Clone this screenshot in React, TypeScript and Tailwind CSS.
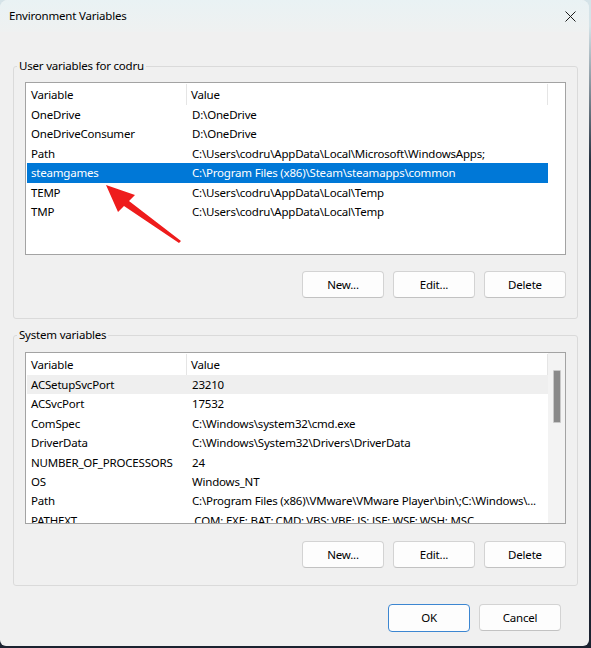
import React from 'react';

type Row = [string, string];

const userRows: Row[] = [
  ['OneDrive', 'D:\\OneDrive'],
  ['OneDriveConsumer', 'D:\\OneDrive'],
  ['Path', 'C:\\Users\\codru\\AppData\\Local\\Microsoft\\WindowsApps;'],
  ['steamgames', 'C:\\Program Files (x86)\\Steam\\steamapps\\common'],
  ['TEMP', 'C:\\Users\\codru\\AppData\\Local\\Temp'],
  ['TMP', 'C:\\Users\\codru\\AppData\\Local\\Temp'],
];

const systemRows: Row[] = [
  ['ACSetupSvcPort', '23210'],
  ['ACSvcPort', '17532'],
  ['ComSpec', 'C:\\Windows\\system32\\cmd.exe'],
  ['DriverData', 'C:\\Windows\\System32\\Drivers\\DriverData'],
  ['NUMBER_OF_PROCESSORS', '24'],
  ['OS', 'Windows_NT'],
  ['Path', 'C:\\Program Files (x86)\\VMware\\VMware Player\\bin\\;C:\\Windows\\...'],
  ['PATHEXT', '.COM;.EXE;.BAT;.CMD;.VBS;.VBE;.JS;.JSE;.WSF;.WSH;.MSC'],
];

function ListBox({ rows, selected, hover, scroll, height }: {
  rows: Row[];
  selected?: number;
  hover?: number;
  scroll?: boolean;
  height: string;
}) {
  return (
    <div className={`${height} border border-[#a3a3a3] bg-white flex overflow-hidden`}>
      <div className="w-[522px] pl-px pt-px overflow-hidden">
        {/* header */}
        <div className="flex h-[21px] leading-[21px]">
          <div className="w-[160px] pl-[4px] border-r border-[#e5e5e5]">Variable</div>
          <div className="flex-1 pl-[4px] border-r border-[#e5e5e5]">Value</div>
        </div>
        {rows.map(([name, value], i) => (
          <div
            key={name + i}
            className={`flex h-[19.4px] leading-[19.4px] whitespace-nowrap ${
              i === selected ? 'bg-[#0078d7] text-white' : i === hover ? 'bg-[#efefef]' : ''
            }`}
          >
            <div className="w-[160px] pl-[4px] shrink-0">{name}</div>
            <div className="flex-1 pl-[5px] overflow-hidden">{value}</div>
          </div>
        ))}
      </div>
      <div className={`flex-1 ${scroll ? 'bg-[#f3f3f3] pt-[17px] flex justify-center' : ''}`}>
        {scroll && <div className="w-[8px] h-[53px] bg-[#8a8a8a] border border-[#c8c8c8] rounded-[1px]" />}
      </div>
    </div>
  );
}

function Btn({ label, primary }: { label: string; primary?: boolean }) {
  return (
    <button
      className={`w-[82px] bg-[#fdfdfd] rounded-[4px] border ${
        primary ? 'border-[#3c86d1] h-[28px]' : 'h-[27px] border-[#d3d3d3] border-b-[#c2c2c2]'
      }`}
    >
      {label}
    </button>
  );
}

function Group({ title, children, top, pt, pb }: {
  title: string;
  children: React.ReactNode;
  top: string;
  pt: string;
  pb: string;
}) {
  return (
    <fieldset className={`${top} ${pt} ${pb} ml-[13px] mr-[11px] px-[11px] border border-[#dadada] rounded-[3px]`}>
      <legend className="ml-[-8px] px-[2px] leading-[16px]">{title}</legend>
      {children}
    </fieldset>
  );
}

export default function App() {
  return (
    <div
      className="w-[591px] h-[648px] bg-[linear-gradient(to_bottom,#d5e3e8_0%,#d5e3e8_4%,#253140_25%,#1b2230_100%)] text-[11.5px] tracking-[-0.2px] text-black"
      style={{ fontFamily: '"Noto Sans", "Open Sans", sans-serif' }}
    >
      <div className="relative w-[589px] h-[646px] bg-[#f0f0f0] rounded-t-[8px] rounded-b-[6px] overflow-hidden">
        {/* title bar */}
        <div className="h-[32px] flex items-center justify-between pl-[9px] pr-[12px] bg-gradient-to-b from-[#e9f2f4] to-[#eff1f1]">
          <span>Environment Variables</span>
          <svg width="11" height="11" viewBox="0 0 11 11" className="mr-px">
            <path d="M0.5 0.5 L10.5 10.5 M10.5 0.5 L0.5 10.5" stroke="#1b1b1b" strokeWidth="1" />
          </svg>
        </div>

        <Group title="User variables for codru" top="mt-[26px]" pt="pt-[8px]" pb="pb-[20px]">
          <ListBox rows={userRows} selected={3} height="h-[173px]" />
          <div className="flex justify-end gap-[9px] mt-[16px]">
            <Btn label="New..." />
            <Btn label="Edit..." />
            <Btn label="Delete" />
          </div>
        </Group>

        <Group title="System variables" top="mt-[8px]" pt="pt-[9px]" pb="pb-[17px]">
          <ListBox rows={systemRows} hover={0} scroll height="h-[172px]" />
          <div className="flex justify-end gap-[9px] mt-[17px]">
            <Btn label="New..." />
            <Btn label="Edit..." />
            <Btn label="Delete" />
          </div>
        </Group>

        <div className="flex justify-end gap-[9px] mt-[18px] pr-[28px]">
          <Btn label="OK" primary />
          <Btn label="Cancel" />
        </div>

        {/* red annotation arrow */}
        <svg className="absolute left-0 top-0 pointer-events-none" width="591" height="648">
          <polygon
            points="106,185 118,212 124,206 179,243 181,241 129,201 135,195"
            fill="#ee1c1c"
          />
        </svg>
      </div>
    </div>
  );
}
